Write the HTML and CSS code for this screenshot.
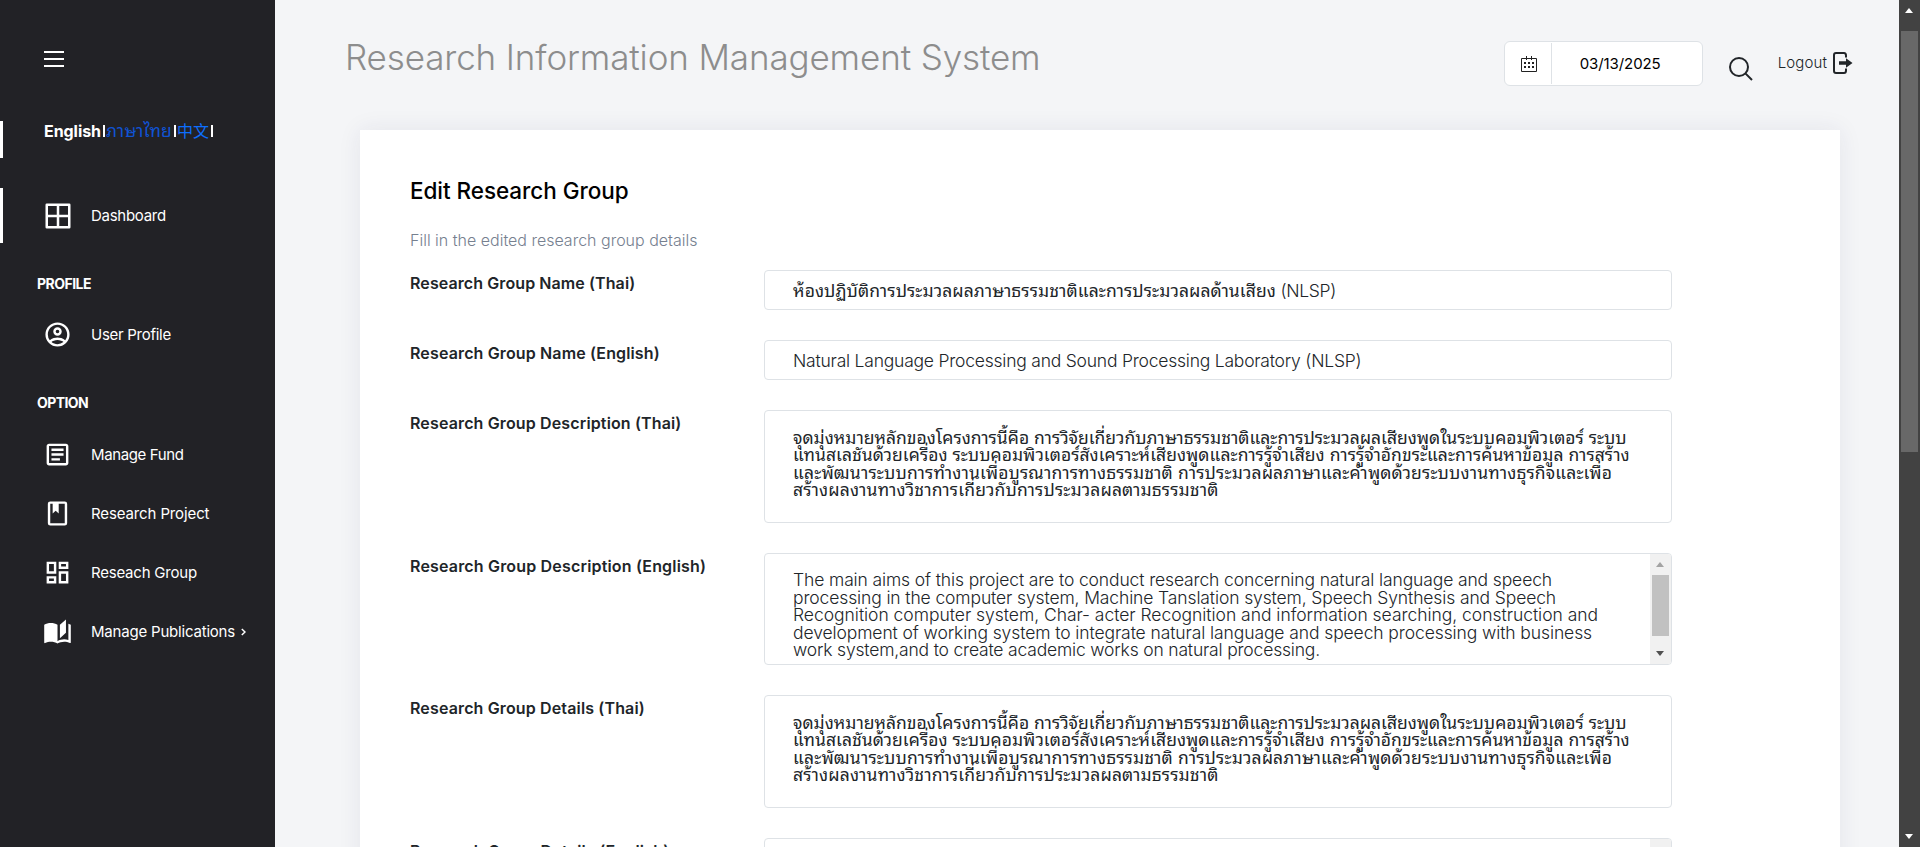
FILE: index.html
```html
<!DOCTYPE html>
<html lang="en">
<head>
<meta charset="utf-8">
<title>Research Information Management System</title>
<link rel="stylesheet" href="styles.css">
</head>
<body>
<div class="app">
  <nav class="sidebar">
    <svg class="burger" viewBox="0 0 20 16"><path d="M0 1h20M0 8h20M0 15h20"/></svg>
    <div class="langs"><b class="lang-en">English</b><i></i><a class="lang-th">ภาษาไทย</a><i></i><a class="lang-zh">中文</a><i></i></div>
    <a class="item item-active"><svg viewBox="0 0 24 24"><path d="M3 3h18v18H3zM12 3v18M3 12h18" class="ln"/></svg><span class="w-dash">Dashboard</span></a>
    <h6 class="group">PROFILE</h6>
    <a class="item"><svg viewBox="0 0 24 24"><path d="M12 2A10 10 0 0 0 2 12a10 10 0 0 0 10 10 10 10 0 0 0 10-10A10 10 0 0 0 12 2M7.070 18.280c.430-.900 3.050-1.780 4.930-1.780s4.510.880 4.930 1.780A7.900 7.900 0 0 1 12 20c-1.860 0-3.570-.640-4.930-1.720m11.290-1.450c-1.430-1.740-4.900-2.330-6.360-2.330s-4.930.590-6.360 2.330A7.930 7.930 0 0 1 4 12c0-4.410 3.590-8 8-8s8 3.590 8 8c0 1.820-.620 3.500-1.640 4.830M12 6c-1.940 0-3.500 1.560-3.500 3.500S10.060 13 12 13s3.500-1.560 3.500-3.500S13.940 6 12 6m0 5a1.500 1.500 0 1 1 0-3 1.500 1.500 0 0 1 0 3"/></svg><span class="w-user">User Profile</span></a>
    <h6 class="group group-option">OPTION</h6>
    <a class="item"><svg viewBox="0 0 24 24"><path d="M5 3c-1.110 0-2 .890-2 2v14c0 1.110.890 2 2 2h14c1.110 0 2-.890 2-2V5c0-1.110-.890-2-2-2zm0 2h14v14H5zm2 2v2h10V7zm0 4v2h10v-2zm0 4v2h7v-2z"/></svg><span class="w-fund">Manage Fund</span></a>
    <a class="item"><svg viewBox="0 0 24 24"><path d="M18 2a2 2 0 0 1 2 2v16a2 2 0 0 1-2 2H6a2 2 0 0 1-2-2V4a2 2 0 0 1 2-2zm0 2h-5v8l-2.500-2.250L8 12V4H6v16h12z"/></svg><span class="w-proj">Research Project</span></a>
    <a class="item"><svg viewBox="0 0 24 24"><path d="M19 5v2h-4V5zM9 5v6H5V5zm10 8v6h-4v-6zM9 17v2H5v-2zM21 3h-8v6h8zM11 3H3v10h8zm10 8h-8v10h8zm-10 4H3v6h8z"/></svg><span class="w-grp">Reseach Group</span></a>
    <a class="item"><svg viewBox="0 0 24 24"><path d="m19 2-5 4.500v11l5-4.500zM6.500 5C4.550 5 2.450 5.400 1 6.500v14.660c0 .250.250.500.500.500.100 0 .150-.070.250-.070 1.350-.650 3.300-1.090 4.750-1.090 1.950 0 4.050.400 5.500 1.500 1.350-.850 3.800-1.500 5.500-1.500 1.650 0 3.350.310 4.750 1.060.100.050.150.030.250.030.250 0 .500-.250.500-.500V6.500c-.600-.450-1.250-.750-2-1V19c-1.100-.350-2.300-.500-3.500-.500-1.700 0-4.150.650-5.500 1.500V6.500C10.550 5.400 8.450 5 6.500 5"/></svg><span class="w-pub">Manage Publications</span><svg class="chev" viewBox="0 0 5 8"><path d="M.8 1 4 4 .8 7"/></svg></a>
  </nav>

  <div class="main">
    <header class="top">
      <h1>Research Information Management System</h1>
      <div class="date"><svg viewBox="0 0 16 16"><path d="M.5 2.500h15v13H.5zM5.500 0v4M10.500 0v4" class="ol"/><path d="M3 6h2v2H3zM7 6h2v2H7zM11 6h2v2h-2zM3 10h2v2H3zM7 10h2v2H7zM11 10h2v2h-2z"/></svg><div class="date-value">03/13/2025</div></div>
      <svg class="search" viewBox="0 0 24 24"><path d="M19 10A9 9 0 1 1 1 10a9 9 0 0 1 18 0zM16.400 16.400 23 23"/></svg>
      <a class="logout"><span>Logout</span><svg viewBox="0 0 20 22"><path d="M13 5.500V3.500Q13 1 11 1H3Q1 1 1 3v16q0 2 2 2h8q2 0 2-2.500v-2" class="door"/><path d="M6 9.300h7V6.200l6.500 4.800-6.500 4.800v-3.100H6z"/></svg></a>
    </header>

    <section class="card">
      <h4>Edit Research Group</h4>
      <p class="hint">Fill in the edited research group details</p>
      <div class="row"><label class="w-l1">Research Group Name (Thai)</label><div class="field"><span class="line th w-th0">ห้องปฏิบัติการประมวลผลภาษาธรรมชาติและการประมวลผลด้านเสียง</span><span class="line nlsp"> (NLSP)</span></div></div>
      <div class="row"><label>Research Group Name (English)</label><div class="field"><span class="line w-en0">Natural Language Processing and Sound Processing Laboratory (NLSP)</span></div></div>
      <div class="row"><label>Research Group Description (Thai)</label><div class="field area"><span class="line th w-th1">จุดมุ่งหมายหลักของโครงการนี้คือ การวิจัยเกี่ยวกับภาษาธรรมชาติและการประมวลผลเสียงพูดในระบบคอมพิวเตอร์ ระบบ</span><span class="line th w-th2">แทนสเลชันด้วยเครื่อง ระบบคอมพิวเตอร์สังเคราะห์เสียงพูดและการรู้จำเสียง การรู้จำอักขระและการค้นหาข้อมูล การสร้าง</span><span class="line th w-th3">และพัฒนาระบบการทำงานเพื่อบูรณาการทางธรรมชาติ การประมวลผลภาษาและคำพูดด้วยระบบงานทางธุรกิจและเพื่อ</span><span class="line th w-th4">สร้างผลงานทางวิชาการเกี่ยวกับการประมวลผลตามธรรมชาติ</span></div></div>
      <div class="row"><label class="w-l4">Research Group Description (English)</label><div class="field area area-en"><span class="line w-en1">The main aims of this project are to conduct research concerning natural language and speech</span><span class="line w-en2">processing in the computer system, Machine Tanslation system, Speech Synthesis and Speech</span><span class="line w-en3">Recognition computer system, Char- acter Recognition and information searching, construction and</span><span class="line w-en4">development of working system to integrate natural language and speech processing with business</span><span class="line w-en5">work system,and to create academic works on natural processing.</span><div class="mini-bar"><i class="up"></i><i class="thumb"></i><i class="down"></i></div></div></div>
      <div class="row"><label>Research Group Details (Thai)</label><div class="field area"><span class="line th w-th1">จุดมุ่งหมายหลักของโครงการนี้คือ การวิจัยเกี่ยวกับภาษาธรรมชาติและการประมวลผลเสียงพูดในระบบคอมพิวเตอร์ ระบบ</span><span class="line th w-th2">แทนสเลชันด้วยเครื่อง ระบบคอมพิวเตอร์สังเคราะห์เสียงพูดและการรู้จำเสียง การรู้จำอักขระและการค้นหาข้อมูล การสร้าง</span><span class="line th w-th3">และพัฒนาระบบการทำงานเพื่อบูรณาการทางธรรมชาติ การประมวลผลภาษาและคำพูดด้วยระบบงานทางธุรกิจและเพื่อ</span><span class="line th w-th4">สร้างผลงานทางวิชาการเกี่ยวกับการประมวลผลตามธรรมชาติ</span></div></div>
      <div class="row"><label class="w-l4">Research Group Details (English)</label><div class="field area area-en"><div class="mini-bar"><i class="up"></i><i class="thumb"></i><i class="down"></i></div></div></div>
    </section>
  </div>

  <div class="page-bar"><i class="up"></i><i class="thumb"></i><i class="down"></i></div>
</div>
</body>
</html>
```
FILE: styles.css
```css
* { box-sizing: border-box; }
body { margin: 0; font-family: Inter, "Noto Sans Thai Looped", "Noto Sans Thai", "Noto Sans CJK SC", sans-serif; color: #212529; background: #f4f5f7; overflow: hidden; }
h1, h4, h6, p { margin: 0; }
i { font-style: normal; }
span { white-space: pre; }

.app { display: flex; height: 847px; overflow: hidden; }

/* Sidebar */
.sidebar { flex: none; width: 275px; background: #222226; color: #fff; display: flex; flex-direction: column; }
.burger { width: 20px; height: 16px; margin: 51px 0 0 44px; stroke: #fff; stroke-width: 2; fill: none; flex: none; }
.langs { margin-top: 54px; height: 37px; padding: 0 0 17px 41px; border-left: 3px solid #fff; display: flex; align-items: center; font-size: 16px; line-height: 20px; white-space: nowrap; flex: none; }
.langs i { width: 1.5px; height: 12px; margin: 0 1.5px 0 2px; background: #fff; }
.lang-en { width: 57px; letter-spacing: -.056px; }
.lang-th { width: 66px; font-size: 17.5px; letter-spacing: .1px; color: #1053d4; }
.lang-zh { width: 32px; color: #0d6efd; }
.item { display: flex; align-items: center; height: 59px; padding-left: 44px; font-size: 15px; flex: none; }
.item svg { width: 29px; height: 29px; margin-left: -1px; margin-right: 19px; fill: #fff; flex: none; }
.item .ln { fill: none; stroke: #fff; stroke-width: 2; stroke-linejoin: round; }
.item .chev { width: 5px; height: 8px; margin: 0 0 0 6px; fill: none; stroke: #fff; stroke-width: 1.5; }
.item-active { height: 55px; margin-top: 30px; padding-left: 41px; border-left: 3px solid #fff; }
.item-active svg { width: 30px; height: 30px; margin-right: 18px; }
.group { height: 20px; line-height: 20px; padding-left: 37px; font-size: 14px; font-weight: 700; letter-spacing: -.518px; margin: 31px 0 11px; flex: none; }
.group-option { margin-top: 29px; margin-bottom: 12px; letter-spacing: -.6px; }
.w-dash { letter-spacing: -.28px; }
.w-user { letter-spacing: -.28px; }
.w-fund { letter-spacing: -.37px; }
.w-proj { letter-spacing: -.12px; }
.w-grp { letter-spacing: -.22px; }
.w-pub { letter-spacing: -.199px; }

/* Header */
.main { flex: 1; min-width: 0; }
.top { height: 130px; padding: 0 46px 0 70px; display: flex; align-items: flex-start; }
h1 { font-size: 35px; font-weight: 300; color: #8d8d8d; line-height: 42px; letter-spacing: -.13px; margin-top: 36px; flex: 1; white-space: nowrap; }
.date { display: flex; width: 199px; height: 45px; margin-top: 41px; background: #fff; border: 1px solid #dee2e6; border-radius: 6px; align-items: center; }
.date svg { width: 16px; height: 16px; margin: 0 14px 0 16px; fill: #222; }
.date .ol { fill: none; stroke: #222; }
.date-value { flex: 1; height: 41px; border-left: 1px solid #dee2e6; padding-left: 28px; font-size: 15px; line-height: 42px; letter-spacing: -.08px; color: #000; }
.search { width: 24px; height: 24px; margin: 57px 0 0 26px; fill: none; stroke: #212529; stroke-width: 2; }
.logout { display: flex; align-items: center; gap: 6px; margin: 52px 0 0 25px; font-size: 15px; height: 22px; font-weight: 300; letter-spacing: .12px; }
.logout span { margin-top: -2px; }
.logout svg { width: 20px; height: 22px; fill: #212529; }
.logout .door { fill: none; stroke: #212529; stroke-width: 2; }

/* Form card */
.card { margin-left: 85px; width: 1480px; height: 760px; background: #fff; box-shadow: 0 0 22px rgba(40, 40, 90, .08); padding: 47px 50px 0; }
h4 { font-size: 22.5px; font-weight: 500; line-height: 28px; letter-spacing: -.055px; color: #000; }
.hint { margin: 23px 0 17px; height: 25px; line-height: 25px; font-size: 16px; font-weight: 300; color: #76808f; }
.row { display: flex; margin-bottom: 30px; }
label { width: 354px; font-size: 16px; font-weight: 600; line-height: 20px; letter-spacing: .14px; padding-top: 3px; }
.w-l1 { letter-spacing: .09px; }
.w-l4 { letter-spacing: .176px; }
.field { position: relative; width: 908px; height: 40px; border: 1px solid #dee2e6; border-radius: 4px; padding: 11px 28px; font-size: 17.5px; line-height: 17.5px; font-weight: 300; white-space: nowrap; }
.line { display: inline-block; }
.area { height: 112.65px; padding-top: 17.5px; }
.area .line { display: block; width: max-content; }
.th { font-weight: 400; }
.nlsp { letter-spacing: -.333px; }
.w-th0 { letter-spacing: .08px; }
.w-th1 { letter-spacing: -.01px; }
.w-th2 { letter-spacing: .03px; }
.w-th3 { letter-spacing: .14px; }
.w-th4 { letter-spacing: .13px; }
.w-en0 { letter-spacing: -.218px; }
.w-en1 { letter-spacing: -.127px; }
.w-en2 { letter-spacing: -.123px; }
.w-en3 { letter-spacing: -.031px; }
.w-en4 { letter-spacing: -.098px; }
.w-en5 { letter-spacing: -.181px; }

/* Scrollbars */
.mini-bar { position: absolute; right: 0; top: 0; bottom: 0; width: 21px; background: #f1f1f1; border-radius: 0 3px 3px 0; }
.mini-bar i, .page-bar i { position: absolute; left: 6px; border: 4.5px solid transparent; }
.mini-bar .up { top: 4px; border-bottom: 5px solid #a3a3a3; }
.mini-bar .down { bottom: 4px; border-top: 5px solid #505050; }
.mini-bar .thumb { left: 2px; width: 17px; top: 21px; height: 61px; border: 0; background: #c1c1c1; }
.page-bar { position: relative; width: 21px; background: #424242; }
.page-bar .up { top: 4px; border-bottom: 5px solid #fff; }
.page-bar .down { bottom: 4px; border-top: 5px solid #fff; }
.page-bar .thumb { left: 2px; width: 17px; top: 31px; height: 421px; border: 0; background: #686868; }
```
